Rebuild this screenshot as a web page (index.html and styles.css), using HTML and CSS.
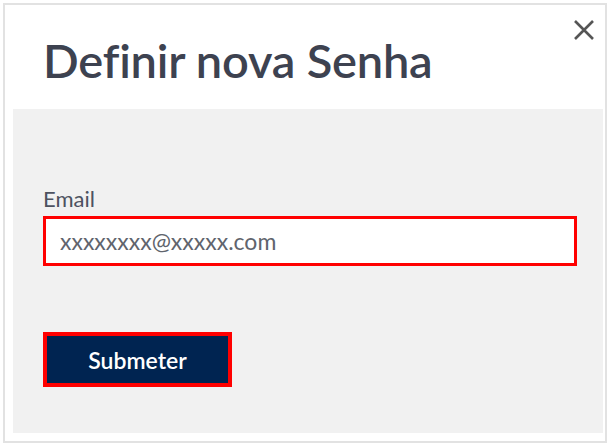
FILE: index.html
```html
<!DOCTYPE html>
<html lang="pt">
<head>
<meta charset="UTF-8">
<title>Definir nova Senha</title>
<link rel="stylesheet" href="styles.css">
</head>
<body>
	<div class="modal">
		<div class="modal-head">
			<h1>Definir nova Senha</h1>
			<a href="#none" class="close" aria-label="Fechar">
				<svg width="22" height="22" viewBox="0 0 22 22"><path d="M2 2L20 20M20 2L2 20" stroke="#555" stroke-width="2.6" fill="none"/></svg>
			</a>
		</div>
		<div class="modal-body">
			<label class="field-label" for="email">Email</label>
			<div class="input-box"><input id="email" type="text" value="xxxxxxxx@xxxxx.com"></div>
			<button type="button" class="submit">Submeter</button>
		</div>
	</div>
</body>
</html>
```

FILE: styles.css
```css
*{margin: 0; padding: 0; box-sizing: border-box;}
html, body{background: #fff;}
body{padding: 3px 4px 3px 3px; font-family: Lato, "Noto Sans", sans-serif;}
a{text-decoration: none; color: inherit;}

.modal{
	border: 2px solid #e2e2e2;
	height: 440px;
	padding: 0 2px 8px 8px;
	display: flex;
	flex-direction: column;
}
.modal-head{
	display: flex;
	justify-content: space-between;
	align-items: flex-start;
	height: 104px;
}
.modal-head h1{
	font-size: 47px;
	font-weight: 600;
	color: #3d4250;
	letter-spacing: -0.2px;
	padding: 32px 0 0 30px;
	line-height: 1;
}
.close{display: block; padding: 14px 8px 0 0;}

.modal-body{
	background: #f1f1f1;
	flex: 1;
	padding: 78px 26px 0 30px;
}
.field-label{
	display: block;
	font-size: 22px;
	color: #4d5260;
	line-height: 24px;
	margin-bottom: 5px;
}
.input-box{
	border: 3px solid #ff0000;
	background: #fff;
	height: 50px;
	display: flex;
	align-items: center;
}
.input-box input{
	border: 0;
	outline: 0;
	width: 100%;
	padding-left: 14px;
	font: 23px Lato, "Noto Sans", sans-serif;
	color: #60646d;
	background: transparent;
}
.submit{
	display: block;
	margin-top: 66px;
	width: 189px;
	height: 55px;
	border: 4px solid #ff0000;
	background: #002451;
	color: #fff;
	font: 600 23px Lato, "Noto Sans", sans-serif;
}
```
